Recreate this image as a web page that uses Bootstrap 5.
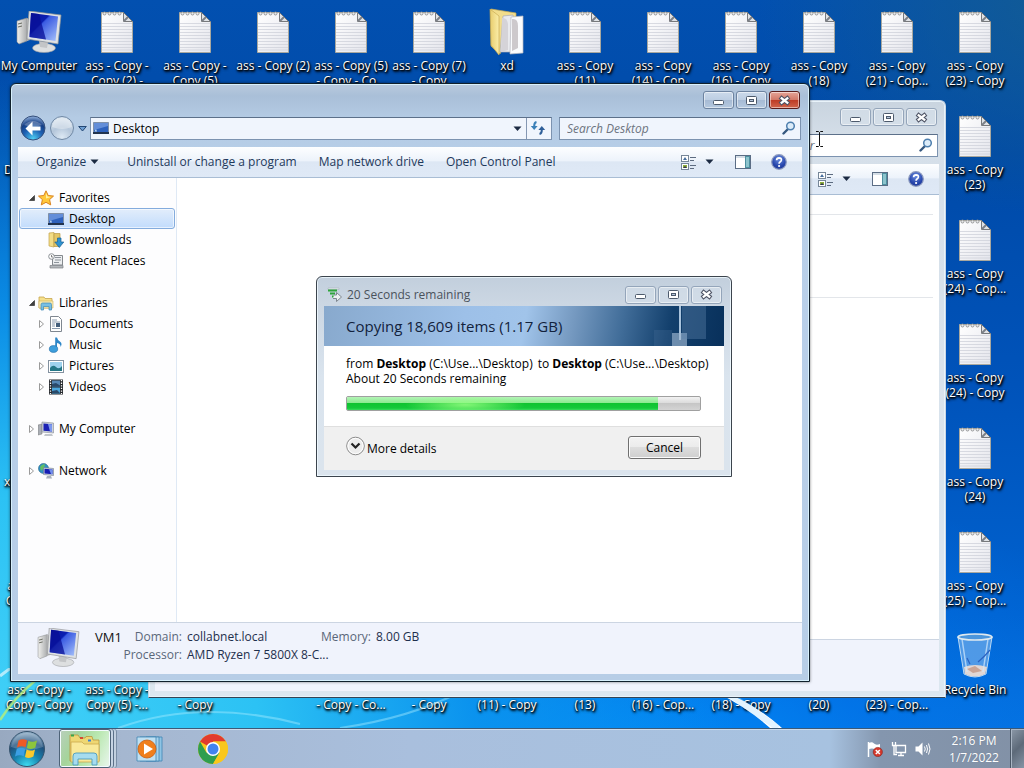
<!DOCTYPE html>
<html lang="en">
<head>
<meta charset="utf-8">
<meta name="viewport" content="width=device-width, initial-scale=1">
<title>Desktop</title>
<link href="https://cdn.jsdelivr.net/npm/bootstrap@5.3.0/dist/css/bootstrap.min.css" rel="stylesheet">
<style>
  html, body { height: 100%; }
  body { font-family: "Open Sans", "Noto Sans", sans-serif; font-size: 12px; line-height: 15px; color: #000; }
  svg { display: block; flex: none; }
  button, input { font: inherit; }
  .screen { height: 100vh; min-height: 500px; }
  .wall { background:
      radial-gradient(ellipse 75% 88% at -3% 98%, #45d3f8 0%, #2cc2f4 38%, rgba(12,150,238,.85) 66%, rgba(0,100,215,0) 100%),
      radial-gradient(ellipse 60% 45% at 58% 104%, rgba(0,150,255,.9) 0%, rgba(0,120,240,.6) 50%, rgba(0,100,215,0) 100%),
      radial-gradient(ellipse 30% 28% at 104% 0%, rgba(22,94,142,.8) 0%, rgba(10,80,140,0) 100%),
      linear-gradient(180deg, #0250b0 0%, #004aa8 20%, #0053ba 50%, #0062d0 80%, #0874e0 100%); }
  .streaks { left: 0; bottom: 0; width: 1024px; height: 100px; }
  /* desktop icons */
  .icons { display: grid; grid-template-columns: repeat(14, 78px); grid-template-rows: repeat(7, 104px); color: #fff; }
  .ico { display: flex; flex-direction: column; align-items: center; padding-top: 6px; text-align: center; white-space: nowrap; text-shadow: 1px 1px 2px #000, 0 1px 2px #000, 1px 2px 3px #000; }
  .ico .pic { height: 52px; display: flex; align-items: center; }
  .ico.rim { align-items: flex-start; padding-left: 4px; }
  .r1 { grid-row: 1; } .r2 { grid-row: 2; } .r3 { grid-row: 3; } .r4 { grid-row: 4; } .r5 { grid-row: 5; } .r6 { grid-row: 6; } .r7 { grid-row: 7; }
  .c1 { grid-column: 1; } .c2 { grid-column: 2; } .c3 { grid-column: 3; } .c4 { grid-column: 4; } .c5 { grid-column: 5; } .c6 { grid-column: 6; } .c7 { grid-column: 7; }
  .c8 { grid-column: 8; } .c9 { grid-column: 9; } .c10 { grid-column: 10; } .c11 { grid-column: 11; } .c12 { grid-column: 12; } .c13 { grid-column: 13; }
  /* windows */
  .win { border: 1px solid #10202c; border-radius: 6px 6px 0 0; display: flex; flex-direction: column; }
  .win-main { left: 10px; right: 214px; top: 83px; bottom: 86px; padding: 0 7px 7px; z-index: 3;
    background: linear-gradient(180deg, #b9cade 0%, #a9bfd8 12px, #b4cbe4 34px, #b9d0ea 100px, #b7cde6 100%);
    box-shadow: inset 0 0 0 1px #d8f0fc, 0 0 3px rgba(0,0,0,.5); }
  .win-back { left: 148px; right: 78px; top: 100px; bottom: 70px; padding: 0 6px 6px; z-index: 2; border-color: #c9d6e4; border-bottom-color: #345; background: linear-gradient(180deg, #c9d4df 0, #d5dfe9 40px, #dce7f0 100%);
    box-shadow: inset 0 0 0 1px #e9f3fa; }
  .caps { display: flex; justify-content: flex-end; gap: 2px; padding: 7px 2px 0 0; height: 32px; }
  .cap-btn { width: 31px; height: 18px; padding: 0; border: 1px solid #6d83a0; border-radius: 3px; display: flex; align-items: center; justify-content: center;
    background: linear-gradient(180deg, #cbd9ea 0, #bccde2 50%, #a6bad4 50%, #b5c9e0 100%); box-shadow: inset 0 0 0 1px rgba(255,255,255,.5); }
  .cap-btn.shut { border-color: #5a1d1c; background: linear-gradient(180deg, #e5a598 0, #d27766 50%, #bd3a24 50%, #d1654c 100%); }
  .dim .cap-btn { border-color: #94a5ba; background: rgba(215,225,236,.5); }
  .navrow { display: flex; align-items: center; height: 24px; gap: 3px; padding: 0 1px 0 2px; margin-bottom: 7px; }
  .orb-btn { border: 0; padding: 0; background: none; }
  .addr { flex: 1 1 0; min-width: 0; height: 23px; display: flex; border: 1px solid #7c93b0; border-top-color: #5c708a; background: #f0f5fd; }
  .addr .cell { display: flex; align-items: center; border: 0; background: none; padding: 0 4px 0 2px; }
  .addr .cell + .cell { border-left: 1px solid #8497b3; width: 25px; justify-content: center; }
  .find { width: 242px; height: 23px; margin-left: 4px; display: flex; align-items: center; border: 1px solid #7c93b0; border-top-color: #5c708a; background: #f0f5fd; padding: 0 4px 0 7px; }
  .find input { flex: 1; min-width: 0; height: 20px; border: 0; padding: 0; background: none; outline: 0; font-style: italic; }
  .find input::placeholder { color: #6d7480; opacity: 1; }
  .inner { flex: 1; min-height: 0; display: flex; flex-direction: column; background: #fff; }
  .panes { flex: 1; min-height: 0; display: flex; }
  .tools { height: 31px; flex: none; display: flex; align-items: center; border-bottom: 1px solid #a9bdd4; background: linear-gradient(180deg, #fdfeff 0, #edf3fb 45%, #dde7f4 50%, #dfe9f6 100%); color: #1e395b; padding: 0 15px 1px 18px; }
  .tools a, .tools button { color: #1e395b; text-decoration: none; background: none; border: 0; padding: 0; white-space: nowrap; }
  .tools .tl { margin-left: 22px; }
  .tools button + .tl { margin-left: 28px; }
  .tools .pv { margin: 0 20px 0 21px; }
  .side { width: 159px; flex: none; border-right: 1px solid #dfe9f5; padding: 9px 1px; background: #fdfdfe; }
  .side .grp { gap: 21px; }
  .side .sp { width: 10px; flex: none; }
  .side a { display: flex; align-items: center; height: 21px; color: #000; text-decoration: none; border: 1px solid transparent; border-radius: 3px; padding-left: 8px; }
  .side .tw { width: 8px; margin-right: 2px; }
  .side svg.g { margin-right: 5px; }
  .side ul ul a { padding-left: 18px; }
  .side .sel { border-color: #84acdd; background: linear-gradient(180deg, #e2edfb, #c2dcfc); box-shadow: inset 0 0 0 1px rgba(255,255,255,.6); }
  .info { height: 52px; flex: none; border-top: 1px solid #ccd5e2; background: #f0f3fc; color: #1e2f4c; }
  .info dt, .info dd { margin: 0; font-weight: 400; line-height: 18px; white-space: nowrap; }
  .info dt { color: #5a6779; text-align: right; }
  .facts { display: grid; grid-template-columns: 60px 129px 50px auto; column-gap: 5px; align-content: start; margin: 5px 0 0; }
  .vmico { margin: 5px 0 0 19px; }
  .vm { font-size: 13px; color: #111; line-height: 18px; margin: 5px 0 0 15px; width: 27px; }
  .hair { height: 1px; background: #e3e6ea; margin: 19px 6px 0; }
  .hair + .hair { margin-top: 82px; }
  /* copy dialog */
  .dlg { left: 316px; top: 276px; width: 416px; z-index: 5; border: 1px solid #3c444d; border-radius: 6px 6px 0 0; padding: 0 7px 6px; background: linear-gradient(180deg, #c2cfdd 0, #ccd7e3 28px, #dae4ee 100px, #dbe4ed 100%); box-shadow: inset 0 0 0 1px rgba(240,250,255,.8); }
  .dlg-head { height: 29px; display: flex; align-items: center; padding: 6px 2px 0 3px; color: #4a525c; }
  .dcaps { gap: 2px; }
  .banner { height: 40px; padding-left: 22px; display: flex; align-items: center; font-size: 15px; line-height: 20px; color: #12223c; background: linear-gradient(100deg, #88a9cd 0, #9dc0e8 35%, #a1c4ea 50%, #7599c0 62%, #416d99 74%, #123f6c 86%, #08305b 100%); }
  .banner svg { right: 0; top: 0; }
  .dlg-body { background: #fff; padding: 10px 23px 15px 22px; border-bottom: 1px solid #dfdfdf; }
  .route { display: flex; gap: 5px; white-space: nowrap; }
  .bar-track { height: 15px; margin-top: 10px; border: 1px solid #a0a0a0; border-radius: 2px; background: linear-gradient(180deg, #f2f2f2 0, #dcdcdc 45%, #c6c6c6 50%, #d4d4d4 100%); }
  .bar-fill { background: radial-gradient(ellipse 60px 10px at 38% 60%, rgba(150,255,130,.85), rgba(150,255,130,0)), linear-gradient(180deg, #b4f4b6 0, #8bea90 45%, #0fc330 50%, #14c93a 85%, #3ada5c 100%); transition: none; }
  .dlg-foot { height: 43px; background: #f0f0f0; padding: 9px 23px 0 22px; display: flex; justify-content: space-between; align-items: flex-start; }
  .more { border: 0; background: none; padding: 0; display: flex; gap: 2px; align-items: center; }
  .cancel { width: 73px; height: 23px; padding: 0; font-size: 12px; line-height: 15px; border: 1px solid #707070; border-radius: 3px; color: #000; background: linear-gradient(180deg, #f3f3f3 0, #ebebeb 50%, #dddddd 50%, #cfcfcf 100%); box-shadow: inset 0 0 0 1px #fbfbfb; }
  /* taskbar */
  .taskbar { height: 40px; z-index: 6; border-top: 1px solid #3c5a78; box-shadow: inset 0 1px 0 #cddced; background: linear-gradient(90deg, #98a9c0 0, #a5b7d0 12%, #a9bfdd 40%, #a7c2e0 81%, #8496ae 86%, #8291a6 100%); }
  .taskbar button { border: 0; padding: 0; background: none; }
  .taskbar .orbslot { margin: 0 13px 0 8px; }
  .taskbar .wmp { margin-left: 25px; }
  .taskbar .chr { margin-left: 34px; }
  .taskbar .task { width: 52px; height: 39px; display: flex; align-items: center; justify-content: center; border: 1px solid #4e6378; border-radius: 3px; box-shadow: inset 0 0 0 1px #f4fbff, 2px 0 0 #c6d4e4, 3px 0 0 #5b7088, 5px 0 0 #c2d0e0, 6px 0 0 #7a8ea6; background: linear-gradient(115deg, #b9cfbd 0, #a5d49b 30%, #b9e8b0 60%, #eaf6ee 100%); }
  .tray { gap: 8px; }
  .clock { color: #fff; text-align: center; line-height: 17px; width: 64px; margin: 0 4px 0 11px; text-shadow: 0 0 1px #68788c; }
  .taskbar .peek { width: 14px; height: 39px; border-left: 1px solid #4b5867; background: linear-gradient(135deg, #8c99a8, #5d6a79 50%, #8694a5); box-shadow: inset 1px 1px 0 #aab6c4; }
  .beam { left: 815px; top: 131px; z-index: 9; }
</style>
</head>
<body>
<svg width="0" height="0" class="position-absolute" aria-hidden="true">
  <defs>
    <linearGradient id="gPaper" x1="0" y1="0" x2="1" y2="1"><stop offset="0" stop-color="#fff"/><stop offset="1" stop-color="#e4e5ec"/></linearGradient>
    <linearGradient id="gScreen" x1="0" y1="0" x2="1" y2="1"><stop offset="0" stop-color="#0b119c"/><stop offset=".38" stop-color="#0a1fb2"/><stop offset=".42" stop-color="#3a5be2"/><stop offset="1" stop-color="#a9c4fb"/></linearGradient>
    <linearGradient id="gGrey" x1="0" y1="0" x2="1" y2="0"><stop offset="0" stop-color="#f1f1ee"/><stop offset="1" stop-color="#a9abad"/></linearGradient>
    <linearGradient id="gFold" x1="0" y1="0" x2="1" y2="0"><stop offset="0" stop-color="#e8cc6c"/><stop offset="1" stop-color="#fbeea9"/></linearGradient>
    <radialGradient id="gBack" cx=".5" cy=".95" r=".9"><stop offset="0" stop-color="#4fd0f4"/><stop offset=".45" stop-color="#1e62b4"/><stop offset=".75" stop-color="#163f86"/><stop offset="1" stop-color="#7fa0cf"/></radialGradient>
    <radialGradient id="gFwd" cx=".5" cy=".9" r=".9"><stop offset="0" stop-color="#dde9f4"/><stop offset=".5" stop-color="#b4c6da"/><stop offset="1" stop-color="#dbe6f0"/></radialGradient>
    <radialGradient id="gOrb" cx=".5" cy="1" r="1"><stop offset="0" stop-color="#3fe0f4"/><stop offset=".4" stop-color="#1782ae"/><stop offset=".7" stop-color="#20507c"/><stop offset="1" stop-color="#9db9cf"/></radialGradient>
    <radialGradient id="gHelp" cx=".5" cy=".3" r=".8"><stop offset="0" stop-color="#6c8ee0"/><stop offset=".6" stop-color="#2746ac"/><stop offset="1" stop-color="#1d3590"/></radialGradient>

    <symbol id="note" viewBox="0 0 32 42">
      <path d="M.5 1.5H22.500L31.500 10.500V41.500H.5Z" fill="url(#gPaper)" stroke="#a9a89f"/>
      <path d="M1 12.500H31M1 15.500H31M1 18.500H31M1 21.500H31M1 24.500H31M1 27.500H31M1 30.500H31M1 33.500H31M1 36.500H31M1 39H31" stroke="#cfd2da" stroke-width=".8"/>
      <path d="M22.500 1.500V10.500H31.500Z" fill="#dfe2e6" stroke="#77797c"/><path d="M23 10L27 6" stroke="#7c8088" stroke-width="2"/>
      <g fill="#e8e8e8" stroke="#8d9092" stroke-width=".9"><circle cx="3.500" cy="2.500" r="1.500"/><circle cx="8.500" cy="2.500" r="1.500"/><circle cx="13.500" cy="2.500" r="1.500"/><circle cx="18.500" cy="2.500" r="1.500"/></g>
    </symbol>
    <symbol id="pc" viewBox="0 0 46 42">
      <path d="M1 10L11 7V30L3 33L1 31Z" fill="url(#gGrey)" stroke="#8d8f90" stroke-width=".6"/><path d="M11 7L14 9V29L11 30Z" fill="#b7b8b8"/><path d="M2 13L6 12M2 16L6 15" stroke="#66695f"/>
      <ellipse cx="28" cy="37" rx="11.500" ry="4.500" fill="#dddfe0" stroke="#9a9c9f" stroke-width=".6"/><path d="M23 30L32 31L31 37L24 36Z" fill="#c3c5c7"/>
      <path d="M13 0L45 4L42 33L11 28Z" fill="#dfe2e4" stroke="#8f9294" stroke-width=".7"/><path d="M15 2L42 5.500L39.500 30L13.500 26Z" fill="url(#gScreen)"/>
      <path d="M15 2L23 3L30 28.500L13.500 26Z" fill="#080f96" opacity=".75"/>
    </symbol>
    <symbol id="xd" viewBox="0 0 38 48">
      <path d="M3 1L28 5V10L12 46L3 38Z" fill="#f2dd8c" stroke="#c9ab52" stroke-width=".7"/>
      <path d="M15 8L25 7L27 44H12Z" fill="#e9eaee" stroke="#a9abb1" stroke-width=".7"/><path d="M23 9L35 8V45L22 46Z" fill="#fafbfd" stroke="#b7b9c0" stroke-width=".7"/><path d="M24 11Q30 10 30 18V40L24 43Z" fill="#cdc9cc"/>
      <path d="M14 10Q19 9 20 16V42L13 44Z" fill="#d5d3d8"/>
      <path d="M2 1L11 8V47L3 37Z" fill="url(#gFold)" stroke="#c9ab52" stroke-width=".7"/>
    </symbol>
    <symbol id="bin" viewBox="0 0 38 46">
      <path d="M2 4L8 41Q19 47 30 41L36 4Z" fill="#8fc0ee" fill-opacity=".55" stroke="#b9d9f5"/>
      <path d="M8 34Q19 30 31 34L29 41Q19 46 9 41Z" fill="#e1d7d4"/><path d="M11 36L19 33L26 38L17 40Z" fill="#caa596"/>
      <path d="M6 6L11 39M32 6L27 39" stroke="#d4eafd" stroke-width="1.500" opacity=".7"/><path d="M11 25L14 31M22 29Q28 24 34 17" stroke="#2c62c0" stroke-width="1.200" fill="none"/>
      <ellipse cx="19" cy="4" rx="17" ry="3" fill="#4c96dc" stroke="#dfe9ef" stroke-width="1.700"/>
    </symbol>
    <symbol id="mini" viewBox="0 0 13 13"><rect x="1.500" y="6.500" width="10" height="4" rx="1" fill="#fff" stroke="#4d5a6c"/></symbol>
    <symbol id="maxi" viewBox="0 0 13 13"><rect x="1.500" y="2.500" width="10" height="8" rx="1" fill="#fff" stroke="#4d5a6c"/><rect x="4.500" y="5.500" width="4" height="2" fill="#b4c4da" stroke="#4d5a6c"/></symbol>
    <symbol id="ex" viewBox="0 0 13 13"><path d="M2 3L11 10M11 3L2 10" stroke="#4d5263" stroke-width="4.400"/><path d="M2.800 3.600L10.200 9.400M10.200 3.600L2.800 9.400" stroke="#fff" stroke-width="2.400"/></symbol>
    <symbol id="lens" viewBox="0 0 14 14"><path d="M6 8L1.500 12.500" stroke="#36587f" stroke-width="2.400" stroke-linecap="round"/><circle cx="8.500" cy="5" r="3.800" fill="#dcecf9" stroke="#4e7fae" stroke-width="1.500"/></symbol>
    <symbol id="desk" viewBox="0 0 16 14"><path d="M.5 1.500H15.500V11.500H.5Z" fill="#2e62bd" stroke="#7f90a8"/><path d="M1 2H15V5L1 9Z" fill="#638ed9"/><rect x="0" y="11" width="16" height="2" fill="#22344f"/><path d="M1.500 10.500L3 8L4 10.500Z" fill="#c3dcf0"/></symbol>
    <symbol id="views" viewBox="0 0 16 16"><rect x=".5" y="1.500" width="7" height="6" fill="#fff" stroke="#768698"/><rect x=".5" y="9.500" width="7" height="6" fill="#fff" stroke="#768698"/><path d="M2 6L4 3L6 6Z" fill="#456d9c"/><path d="M2 11H6V14H2Z" fill="#8eae3a"/><path d="M2 14L4 12L6 14" fill="#335"/><path d="M9 3.500H15M9 6.500H13M9 11.500H15M9 14.500H13" stroke="#5c6b80"/></symbol>
    <symbol id="pane" viewBox="0 0 16 14"><rect x=".5" y=".5" width="15" height="13" fill="#fff" stroke="#5b6d85"/><path d="M1 2H15" stroke="#a9bccd"/><rect x="10.500" y="1.500" width="4" height="11" fill="#8cc4cd" stroke="#4e8f9f"/></symbol>
    <symbol id="help" viewBox="0 0 16 16"><circle cx="8" cy="8" r="7.300" fill="url(#gHelp)" stroke="#8c9abf" stroke-width="1.200"/><path d="M5.600 6.200Q5.700 3.800 8.100 3.800Q10.500 3.900 10.400 6Q10.300 7.200 9 8Q8.100 8.600 8.100 9.700" fill="none" stroke="#fff" stroke-width="1.700"/><circle cx="8.100" cy="12" r="1.100" fill="#fff"/></symbol>
    <symbol id="down" viewBox="0 0 9 9"><path d="M.5 2.500H8.500L4.500 7Z" fill="#1b2a42"/></symbol>
    <symbol id="open" viewBox="0 0 8 8"><path d="M6.500 1.500V6.500H1.500Z" fill="#404040" stroke="#222" stroke-width=".6"/></symbol>
    <symbol id="shutt" viewBox="0 0 8 10"><path d="M1.500 1.500V8.500L5.500 5Z" fill="#fff" stroke="#9a9a9a"/></symbol>
    <symbol id="mpc" viewBox="0 0 16 16"><path d="M0 4L4 3V13L0 14Z" fill="#a9adb4" stroke="#777" stroke-width=".5"/><path d="M4 1L15.500 2V12L4 11Z" fill="#cdd2da" stroke="#858b95" stroke-width=".6"/><path d="M5.500 2.500L14 3.300V10.600L5.500 9.800Z" fill="#1c22b4"/><path d="M10 3L14 3.300V10.600L12 10.400Z" fill="#7c98ef"/><path d="M7 13H14L15 15H6Z" fill="#c2c6cb"/></symbol>
  </defs>
</svg>

<main class="screen wall position-relative overflow-hidden">
  <svg class="streaks position-absolute" viewBox="0 0 1024 100" aria-hidden="true">
    <path d="M0 8Q20 -8 40 -14" fill="none" stroke="#fff" stroke-width="3" opacity=".6"/>
    <path d="M0 52Q14 30 36 12" fill="none" stroke="#b9ef78" stroke-width="2.500" opacity=".8"/>
    <path d="M118 60Q200 30 300 56M340 60Q410 50 460 24" fill="none" stroke="#a6ecff" stroke-width="2" opacity=".45"/>
    <path d="M720 22Q755 36 782 60H770Q748 40 716 24Z" fill="#fff"/><path d="M680 0L735 30L778 60" fill="none" stroke="#aee0ff" stroke-width="6" opacity=".35"/>
  </svg>

  <section class="icons" aria-label="Desktop icons">
    <div class="ico r1 c1"><div class="pic"><svg width="46" height="42"><use href="#pc"/></svg></div>My Computer</div>
    <div class="ico r1 c2"><div class="pic"><svg width="32" height="42"><use href="#note"/></svg></div>ass - Copy -<br>Copy (2) -</div>
    <div class="ico r1 c3"><div class="pic"><svg width="32" height="42"><use href="#note"/></svg></div>ass - Copy -<br>Copy (5)</div>
    <div class="ico r1 c4"><div class="pic"><svg width="32" height="42"><use href="#note"/></svg></div>ass - Copy (2)</div>
    <div class="ico r1 c5"><div class="pic"><svg width="32" height="42"><use href="#note"/></svg></div>ass - Copy (5)<br>- Copy - Co...</div>
    <div class="ico r1 c6"><div class="pic"><svg width="32" height="42"><use href="#note"/></svg></div>ass - Copy (7)<br>- Copy</div>
    <div class="ico r1 c7"><div class="pic"><svg width="38" height="48"><use href="#xd"/></svg></div>xd</div>
    <div class="ico r1 c8"><div class="pic"><svg width="32" height="42"><use href="#note"/></svg></div>ass - Copy<br>(11)</div>
    <div class="ico r1 c9"><div class="pic"><svg width="32" height="42"><use href="#note"/></svg></div>ass - Copy<br>(14) - Cop...</div>
    <div class="ico r1 c10"><div class="pic"><svg width="32" height="42"><use href="#note"/></svg></div>ass - Copy<br>(16) - Copy</div>
    <div class="ico r1 c11"><div class="pic"><svg width="32" height="42"><use href="#note"/></svg></div>ass - Copy<br>(18)</div>
    <div class="ico r1 c12"><div class="pic"><svg width="32" height="42"><use href="#note"/></svg></div>ass - Copy<br>(21) - Cop...</div>
    <div class="ico r1 c13"><div class="pic"><svg width="32" height="42"><use href="#note"/></svg></div>ass - Copy<br>(23) - Copy</div>
    <div class="ico r2 c13"><div class="pic"><svg width="32" height="42"><use href="#note"/></svg></div>ass - Copy<br>(23)</div>
    <div class="ico r3 c13"><div class="pic"><svg width="32" height="42"><use href="#note"/></svg></div>ass - Copy<br>(24) - Cop...</div>
    <div class="ico r4 c13"><div class="pic"><svg width="32" height="42"><use href="#note"/></svg></div>ass - Copy<br>(24) - Copy</div>
    <div class="ico r5 c13"><div class="pic"><svg width="32" height="42"><use href="#note"/></svg></div>ass - Copy<br>(24)</div>
    <div class="ico r6 c13"><div class="pic"><svg width="32" height="42"><use href="#note"/></svg></div>ass - Copy<br>(25) - Cop...</div>
    <div class="ico r7 c13"><div class="pic"><svg width="38" height="46"><use href="#bin"/></svg></div>Recycle Bin</div>
    <div class="ico rim r2 c1"><div class="pic"></div>D</div>
    <div class="ico rim r5 c1"><div class="pic"></div>x</div>
    <div class="ico r6 c1"><div class="pic"></div>ass - Copy -<br>Copy - Copy</div>
    <div class="ico r7 c1"><div class="pic"></div>ass - Copy -<br>Copy - Copy</div>
    <div class="ico r7 c2"><div class="pic"></div>ass - Copy -<br>Copy (5) -...</div>
    <div class="ico r7 c3"><div class="pic"></div><br>- Copy</div>
    <div class="ico r7 c5"><div class="pic"></div><br>- Copy - Co...</div>
    <div class="ico r7 c6"><div class="pic"></div><br>- Copy</div>
    <div class="ico r7 c7"><div class="pic"></div><br>(11) - Copy</div>
    <div class="ico r7 c8"><div class="pic"></div><br>(13)</div>
    <div class="ico r7 c9"><div class="pic"></div><br>(16) - Cop...</div>
    <div class="ico r7 c10"><div class="pic"></div><br>(18) - Copy</div>
    <div class="ico r7 c11"><div class="pic"></div><br>(20)</div>
    <div class="ico r7 c12"><div class="pic"></div><br>(23) - Cop...</div>
  </section>

  <section class="win win-back dim position-absolute" aria-label="My Computer window">
    <div class="caps">
      <button class="cap-btn" aria-label="Minimize"><svg width="13" height="13"><use href="#mini"/></svg></button>
      <button class="cap-btn" aria-label="Maximize"><svg width="13" height="13"><use href="#maxi"/></svg></button>
      <button class="cap-btn" aria-label="Close"><svg width="13" height="13"><use href="#ex"/></svg></button>
    </div>
    <div class="navrow justify-content-end">
      <div class="find bg-white"><input type="search" aria-label="Search My Computer" placeholder="Search My Computer"><svg width="14" height="14"><use href="#lens"/></svg></div>
    </div>
    <div class="inner">
      <div class="tools justify-content-end">
        <button aria-label="Change your view" class="d-flex align-items-center gap-2"><svg width="16" height="16"><use href="#views"/></svg><svg width="9" height="9"><use href="#down"/></svg></button>
        <button aria-label="Show the preview pane" class="pv"><svg width="16" height="14"><use href="#pane"/></svg></button>
        <button aria-label="Get help"><svg width="16" height="16"><use href="#help"/></svg></button>
      </div>
      <div class="flex-grow-1"><div class="hair"></div><div class="hair"></div></div>
      <div class="info"></div>
    </div>
  </section>

  <section class="win win-main position-absolute" aria-label="Desktop window">
    <div class="caps">
      <button class="cap-btn" aria-label="Minimize"><svg width="13" height="13"><use href="#mini"/></svg></button>
      <button class="cap-btn" aria-label="Maximize"><svg width="13" height="13"><use href="#maxi"/></svg></button>
      <button class="cap-btn shut" aria-label="Close"><svg width="13" height="13"><use href="#ex"/></svg></button>
    </div>
    <div class="navrow">
      <div class="d-flex align-items-center gap-1">
        <button class="orb-btn" aria-label="Back"><svg width="26" height="26" viewBox="0 0 26 26"><circle cx="13" cy="13" r="12" fill="url(#gBack)" stroke="#36507c"/><path d="M4 10Q13 2 22 10Q13 13 4 10Z" fill="#fff" opacity=".28"/><path d="M5.500 13.500L12.500 6.500V11.500H20.500V15.500H12.500V20.500Z" fill="#fff"/></svg></button>
        <button class="orb-btn" aria-label="Forward"><svg width="24" height="26" viewBox="0 0 24 26"><circle cx="12" cy="13" r="11.500" fill="url(#gFwd)" stroke="#6f88a5"/><path d="M2 12Q3 3 12 3Q21 3 22 12Q12 16 2 12Z" fill="#fff" opacity=".35"/></svg></button>
        <button class="orb-btn" aria-label="Recent pages"><svg width="9" height="9" viewBox="0 0 9 9"><path d="M.7 2.500H8.300L4.500 7Z" fill="#6d9ed2" stroke="#254874"/></svg></button>
      </div>
      <div class="addr">
        <div class="cell flex-grow-1"><svg width="16" height="14"><use href="#desk"/></svg><span class="ms-1">Desktop</span><button class="orb-btn ms-auto" aria-label="Previous locations"><svg width="9" height="9"><use href="#down"/></svg></button></div>
        <button class="cell" aria-label="Refresh"><svg width="16" height="14" viewBox="0 0 16 14"><path d="M6.500 1Q4.200 1.500 4.200 5" fill="none" stroke="#3b80b8" stroke-width="2"/><path d="M.8 5H7.600L4.200 9Z" fill="#3b80b8"/><path d="M9.500 13Q11.800 12.500 11.800 9" fill="none" stroke="#2f5f99" stroke-width="2"/><path d="M8.400 9H15.200L11.800 5Z" fill="#2f5f99"/></svg></button>
      </div>
      <div class="find"><input type="search" aria-label="Search Desktop" placeholder="Search Desktop"><svg width="14" height="14"><use href="#lens"/></svg></div>
    </div>
    <div class="inner">
      <div class="tools">
        <button class="d-flex align-items-center gap-1">Organize <svg width="9" height="9"><use href="#down"/></svg></button>
        <a href="#" class="tl">Uninstall or change a program</a>
        <a href="#" class="tl">Map network drive</a>
        <a href="#" class="tl">Open Control Panel</a>
        <button aria-label="Change your view" class="d-flex align-items-center gap-2 ms-auto"><svg width="16" height="16"><use href="#views"/></svg><svg width="9" height="9"><use href="#down"/></svg></button>
        <button aria-label="Show the preview pane" class="pv"><svg width="16" height="14"><use href="#pane"/></svg></button>
        <button aria-label="Get help"><svg width="16" height="16"><use href="#help"/></svg></button>
      </div>
      <div class="panes">
        <nav class="side overflow-hidden" aria-label="Folders">
          <ul class="list-unstyled m-0 d-flex flex-column grp">
            <li><a href="#"><svg class="tw" width="8" height="8"><use href="#open"/></svg><svg class="g" width="16" height="16" viewBox="0 0 16 16"><path d="M8 .8L10.200 5.500L15.500 6.100L11.600 9.600L12.700 14.900L8 12.300L3.300 14.900L4.400 9.600L.5 6.100L5.800 5.500Z" fill="#ffc83a" stroke="#d98321"/><path d="M8 3L9.500 6.500L13 7L8 8.500Z" fill="#fff0a5"/></svg>Favorites</a>
              <ul class="list-unstyled m-0">
                <li><a href="#" class="sel"><span class="sp"></span><svg class="g" width="16" height="14"><use href="#desk"/></svg>Desktop</a></li>
                <li><a href="#"><span class="sp"></span><svg class="g" width="16" height="16" viewBox="0 0 16 16"><path d="M1 1L6 .5V15L1 14Z" fill="#f3dd86" stroke="#c2a24c" stroke-width=".7"/><path d="M6 1.500H12V14.500H6Z" fill="#e4c766" stroke="#b89946" stroke-width=".7"/><path d="M9.500 6H13V10H15.800L11.300 15.500L6.800 10H9.500Z" fill="#2f93cf" stroke="#1b6196" stroke-width=".7"/></svg>Downloads</a></li>
                <li><a href="#"><span class="sp"></span><svg class="g" width="16" height="16" viewBox="0 0 16 16"><path d="M3.500 2.500H14.500V12H4.500V6Z" fill="#eceef0" stroke="#84898e"/><path d="M2 12.500H15V15H2Z" fill="#b4b8bc" stroke="#7b8085" stroke-width=".7"/><path d="M7 4.500H13M7 7H13M6 9.500H11" stroke="#8e959c"/><circle cx="3.500" cy="3.500" r="2.800" fill="#fff" stroke="#8b9095"/><path d="M3.500 2V4H5" stroke="#666" fill="none" stroke-width=".8"/></svg>Recent Places</a></li>
              </ul></li>
            <li><a href="#"><svg class="tw" width="8" height="8"><use href="#open"/></svg><svg class="g" width="16" height="16" viewBox="0 0 16 16"><path d="M1 2H6L7 3.500H14V13H1Z" fill="#f6e08b" stroke="#c6a44e" stroke-width=".8"/><path d="M1 6H15V13H1Z" fill="#faedb2" stroke="#ceb05d" stroke-width=".6"/><path d="M3 15V9.500Q3 8 4.500 8H12Q13.500 8 13.500 9.500V15H11V11.500H5.500V15Z" fill="#77bfe4" stroke="#3e87b4" stroke-width=".7"/></svg>Libraries</a>
              <ul class="list-unstyled m-0">
                <li><a href="#"><svg class="tw" width="8" height="10"><use href="#shutt"/></svg><svg class="g" width="16" height="16" viewBox="0 0 16 16"><path d="M2.500 .5H10.500L13.500 3.500V15.500H2.500Z" fill="#fff" stroke="#7f8790"/><path d="M4 4H9M4 6H12M4 8H7M4 10H7M4 12.500H12" stroke="#7d8fa5" stroke-width=".9"/><rect x="8" y="7" width="4" height="4" fill="#445f7c"/></svg>Documents</a></li>
                <li><a href="#"><svg class="tw" width="8" height="10"><use href="#shutt"/></svg><svg class="g" width="16" height="16" viewBox="0 0 16 16"><path d="M7.200 12V.5H9Q9.500 3.500 12.500 5Q14.500 7 12.500 10Q12.800 6.500 9 6V12Z" fill="#2d86c8"/><ellipse cx="5.500" cy="12" rx="4.200" ry="3.400" fill="#3d9edc" stroke="#1c6aa6" stroke-width=".6"/></svg>Music</a></li>
                <li><a href="#"><svg class="tw" width="8" height="10"><use href="#shutt"/></svg><svg class="g" width="16" height="14" viewBox="0 0 16 14"><rect x=".5" y="1.500" width="15" height="12" fill="#fff" stroke="#8391a0"/><rect x="2" y="3" width="12" height="9" fill="#9ed2ee"/><path d="M2 9Q5 5 8 8T14 7V12H2Z" fill="#247787"/></svg>Pictures</a></li>
                <li><a href="#"><svg class="tw" width="8" height="10"><use href="#shutt"/></svg><svg class="g" width="16" height="16" viewBox="0 0 16 16"><rect x="1" y=".5" width="14" height="15" fill="#26292d"/><rect x="4" y="1.500" width="8" height="6" fill="#5687b5"/><rect x="4" y="8.500" width="8" height="6" fill="#4ba6dd"/><path d="M4 5L8 4L12 6.500V7.500H4ZM4 12L9 11L12 14H4Z" fill="#29496a"/><path d="M2.500 1V15M13.500 1V15" stroke="#fff" stroke-width="1.300" stroke-dasharray="1.300 1.300"/></svg>Videos</a></li>
              </ul></li>
            <li><a href="#"><svg class="tw" width="8" height="10"><use href="#shutt"/></svg><svg class="g" width="16" height="16"><use href="#mpc"/></svg>My Computer</a></li>
            <li><a href="#"><svg class="tw" width="8" height="10"><use href="#shutt"/></svg><svg class="g" width="16" height="16" viewBox="0 0 16 16"><circle cx="5.500" cy="5.500" r="5" fill="#2f8fc4" stroke="#2a6888" stroke-width=".6"/><path d="M2 4Q4 .8 7 1.500L6 5L3 8Z" fill="#62bf62"/><path d="M5.500 4.500L15.500 5.500V12.500L5.500 11.500Z" fill="#ccd3dd" stroke="#6b7788" stroke-width=".6"/><path d="M6.500 5.800L14.500 6.600V11.300L6.500 10.500Z" fill="#161db4"/><path d="M11 6.300L14.500 6.600V11.300L13 11.100Z" fill="#7290ee"/><path d="M9 13H13L14 15.500H8Z" fill="#a9b1bb"/></svg>Network</a></li>
          </ul>
        </nav>
        <div class="flex-grow-1 bg-white"></div>
      </div>
      <div class="info d-flex">
        <svg class="vmico" width="43" height="39"><use href="#pc"/></svg>
        <div class="vm">VM1</div>
        <dl class="facts"><dt>Domain:</dt><dd>collabnet.local</dd><dt>Memory:</dt><dd>8.00 GB</dd><dt>Processor:</dt><dd>AMD Ryzen 7 5800X 8-C...</dd></dl>
      </div>
    </div>
  </section>

  <section class="dlg dim position-absolute" role="dialog" aria-label="20 Seconds remaining">
    <div class="dlg-head">
      <svg width="16" height="16" viewBox="0 0 16 16" class="me-1"><path d="M1 1H12V2.500H1Z" fill="#dfe6ea" stroke="#9aa5ad" stroke-width=".4"/><path d="M1 3.500H10M3 6.500H8M5 9.500H8" stroke="#2fa53b" stroke-width="2"/><path d="M6 11.500H9.500V14.500L14.500 10L9.500 5.500V8H7" fill="#eef1f3" stroke="#747d86" stroke-width=".9"/></svg>
      <span class="me-auto">20 Seconds remaining</span>
      <div class="d-flex dcaps">
        <button class="cap-btn" aria-label="Minimize"><svg width="13" height="13"><use href="#mini"/></svg></button>
        <button class="cap-btn" aria-label="Maximize"><svg width="13" height="13"><use href="#maxi"/></svg></button>
        <button class="cap-btn" aria-label="Close"><svg width="13" height="13"><use href="#ex"/></svg></button>
      </div>
    </div>
    <div class="banner position-relative">Copying 18,609 items (1.17 GB)
      <svg class="position-absolute" width="90" height="40" viewBox="0 0 90 40"><path d="M46 0V34" stroke="#a9c3dc" stroke-width="2"/><rect x="38" y="27" width="15" height="13" fill="#9fb9d2" opacity=".65"/><rect x="48" y="0" width="24" height="33" fill="#5d83aa" opacity=".4"/><rect x="20" y="24" width="18" height="16" fill="#5d83aa" opacity=".2"/></svg>
    </div>
    <div class="dlg-body">
      <div class="route"><span>from <b>Desktop</b> (C:\Use...\Desktop)</span><span>to <b>Desktop</b> (C:\Use...\Desktop)</span></div>
      <div>About 20 Seconds remaining</div>
      <div class="progress bar-track" role="progressbar" aria-label="Copy progress" aria-valuenow="88" aria-valuemin="0" aria-valuemax="100"><div class="progress-bar bar-fill" style="width:88%"></div></div>
    </div>
    <div class="dlg-foot">
      <button class="more"><svg width="19" height="20" viewBox="0 0 19 20"><circle cx="9.500" cy="10" r="8.800" fill="#ececec" stroke="#8b8b8b"/><circle cx="9.500" cy="10" r="7.600" fill="none" stroke="#fff"/><path d="M5.500 7.500L9.500 11.500L13.500 7.500" fill="none" stroke="#222" stroke-width="2.200"/></svg><span class="pt-1">More details</span></button>
      <button class="btn cancel">Cancel</button>
    </div>
  </section>

  <svg class="beam position-absolute" width="9" height="16" viewBox="0 0 9 16" aria-hidden="true"><path d="M1 .5H3.500L4.500 1.500L5.500 .5H8M4.500 1.500V14.500M1 15.500H3.500L4.500 14.500L5.500 15.500H8" fill="none" stroke="#111"/></svg>

  <footer class="taskbar position-absolute bottom-0 start-0 end-0 d-flex align-items-center">
    <button class="orbslot" aria-label="Start"><svg width="38" height="38" viewBox="0 0 38 38"><circle cx="19" cy="19" r="17.500" fill="url(#gOrb)" stroke="#35536d"/><path d="M3 17Q6 3 19 3Q32 3 35 17Q19 23 3 17Z" fill="#fff" opacity=".2"/>
      <path d="M10.500 10.500Q14.500 8 19 10.200L17.600 17.300Q13.500 15.300 9 17.600Z" fill="#ee5a26"/><path d="M20.300 10.800Q24.500 13 29 10.500L27.300 17.800Q23 20 18.900 17.900Z" fill="#8cc63c"/><path d="M8.700 19Q13 16.800 17.200 18.900L15.700 26.200Q11.500 24 7 26.400Z" fill="#3b9fe4"/><path d="M18.600 19.600Q22.700 21.700 27 19.400L25.400 26.600Q21 29 17 26.900Z" fill="#fcc92c"/></svg></button>
    <button class="task" aria-label="Windows Explorer"><svg width="34" height="34" viewBox="0 0 34 34"><path d="M2 6V3H10L12 6H17L18 4.500H24L25 8H31V29H2Z" fill="#eed773" stroke="#b9943c" stroke-width=".8"/><path d="M3 10H14L16 12H31V30H3Z" fill="#f9e999" stroke="#cba84c" stroke-width=".8"/><path d="M3 2.500H6V4.500H3Z" fill="#39a54a"/><path d="M12 5H15V7H12Z" fill="#d44a31"/><path d="M20 7.500H23V9.500H20Z" fill="#3b7fd0"/><path d="M5 33V24Q5 21 8 21H26Q29 21 29 24V33H24V27H10V33Z" fill="#a6dcef" stroke="#4d9bbd" stroke-width=".9"/></svg></button>
    <button class="wmp" aria-label="Windows Media Player"><svg width="28" height="28" viewBox="0 0 28 28"><path d="M10 2H26V26H10Z" fill="#8fc4e4" stroke="#3f86b4" stroke-width=".8"/><path d="M4 2H23V26H4Z" fill="#a8d3ec" stroke="#3f86b4" stroke-width=".8"/><path d="M1 2H20V26H1Z" fill="#bfe0f2" stroke="#3f86b4" stroke-width=".8"/><circle cx="11" cy="14" r="9" fill="#f07f1c" stroke="#c75d12" stroke-width=".8"/><path d="M8 8.500L17 14L8 19.500Z" fill="#fff"/></svg></button>
    <button class="chr" aria-label="Google Chrome"><svg width="30" height="30" viewBox="0 0 30 30"><circle cx="15" cy="15" r="15" fill="#f9c71c"/><path d="M15 15L2.010 7.500A15 15 0 0 1 27.990 7.500H15Z" fill="#e23b2e"/><path d="M2.010 7.500A15 15 0 0 0 15 30L21.500 18.750L15 15L8.500 18.750Z" fill="#2f9e4f"/><path d="M15 7.500H27.990A15 15 0 0 1 15 30L21.500 18.750Z" fill="#f9c71c"/><circle cx="15" cy="15" r="7" fill="#fff"/><circle cx="15" cy="15" r="5.500" fill="#4383ee"/></svg></button>
    <div class="tray ms-auto d-flex align-items-center">
      <svg width="16" height="16" viewBox="0 0 16 16"><path d="M1.500 1V16" stroke="#fff" stroke-width="1.500"/><path d="M2 2Q5 .5 7 2.500T13 3V9Q10 10 8 8.500T2 8Z" fill="#fff"/><circle cx="10.800" cy="11" r="4.600" fill="#d6392d" stroke="#8e1c14" stroke-width=".6"/><path d="M8.800 9L12.800 13M12.800 9L8.800 13" stroke="#fff" stroke-width="1.500"/></svg>
      <svg width="16" height="16" viewBox="0 0 16 16"><path d="M5 4.500H14.500V11.500H5ZM7 14.500H13M10 12V14" fill="none" stroke="#fff" stroke-width="1.300"/><path d="M1.500 1V4.500H4.500V1M3 4.500V13.500H6" fill="none" stroke="#fff" stroke-width="1.300"/></svg>
      <svg width="16" height="16" viewBox="0 0 16 16"><path d="M.5 5.500H3.500L7.500 1.500V14.500L3.500 10.500H.5Z" fill="#fff"/><path d="M9.500 5.500Q11 8 9.500 10.500M11.500 4Q13.500 8 11.500 12M13.500 2.500Q16.500 8 13.500 13.500" fill="none" stroke="#fff"/></svg>
    </div>
    <div class="clock">2:16 PM<br>1/7/2022</div>
    <button class="peek" aria-label="Show desktop"></button>
  </footer>
</main>
<script src="https://cdn.jsdelivr.net/npm/bootstrap@5.3.0/dist/js/bootstrap.bundle.min.js"></script>
</body>
</html>
